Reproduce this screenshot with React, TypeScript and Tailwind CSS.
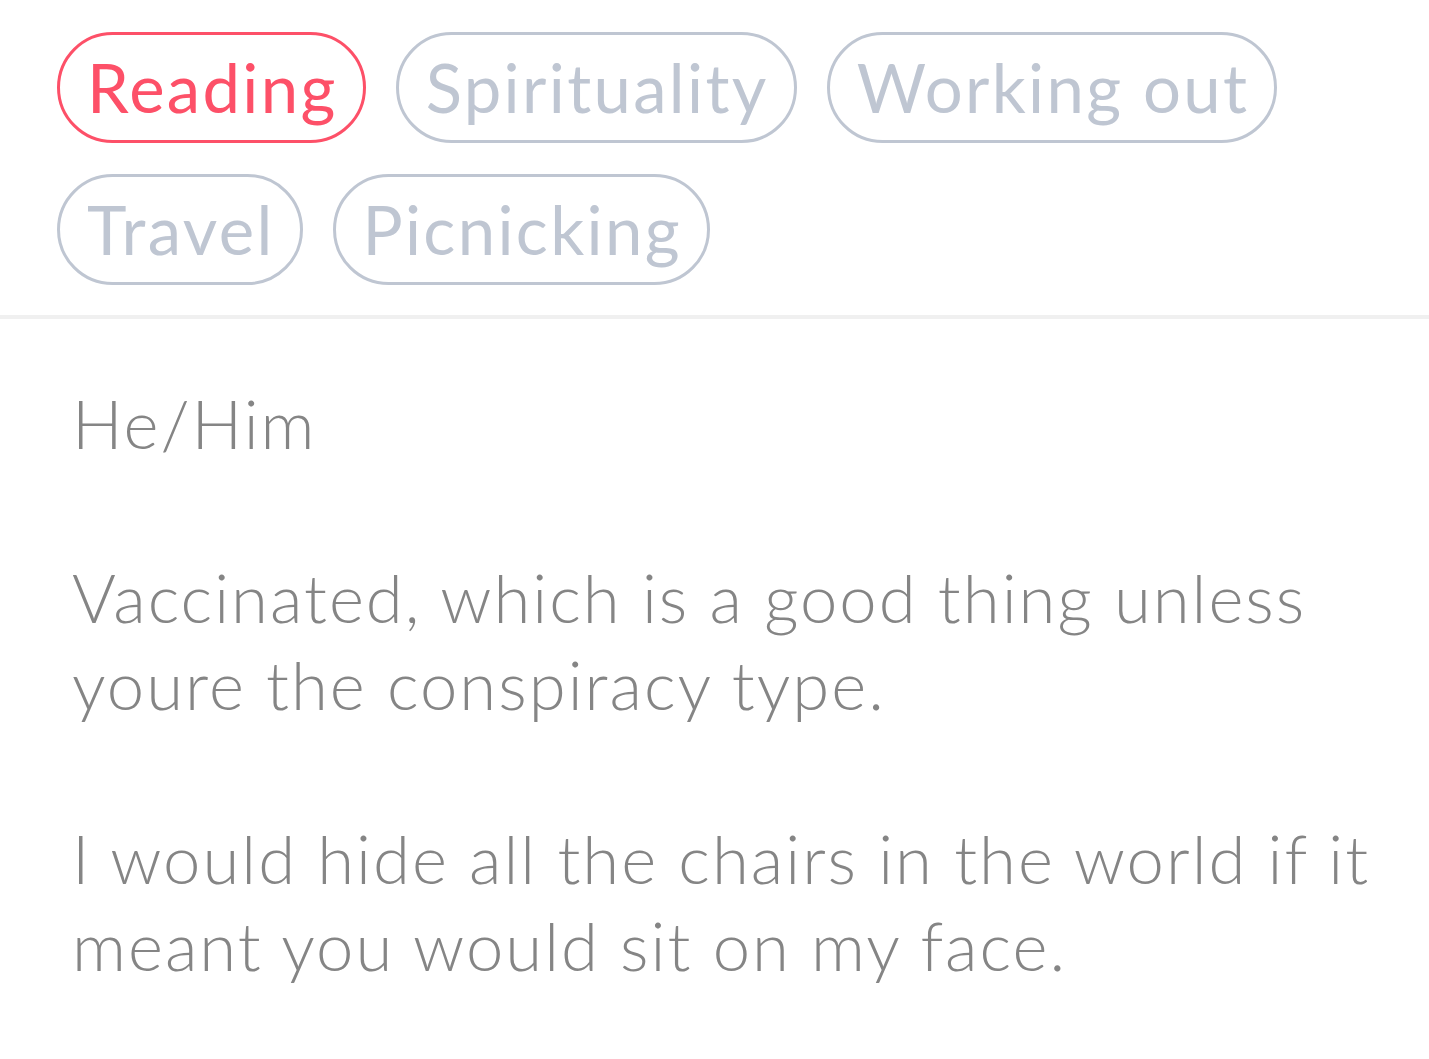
const interests = [
  { label: "Reading", active: true },
  { label: "Spirituality", active: false },
  { label: "Working out", active: false },
  { label: "Travel", active: false },
  { label: "Picnicking", active: false },
];

export default function App() {
  return (
    <div className="min-h-screen bg-white" style={{ fontFamily: "Lato, 'Noto Sans', sans-serif" }}>
      <div className="flex flex-wrap gap-x-[30px] gap-y-[31px] pl-[57px] pr-[40px] pt-[32px] pb-[30px]">
        {interests.map((item) => (
          <span
            key={item.label}
            className={
              "h-[111px] flex items-center rounded-full border-[3px] pl-[27px] pr-[25px] text-[67px] leading-none tracking-[0.035em] " +
              (item.active ? "border-[#fd5068] text-[#fd5068]" : "border-[#bfc6d2] text-[#bfc6d2]")
            }
          >
            {item.label}
          </span>
        ))}
      </div>
      <div className="h-[4px] bg-[#f0f0f0]" />
      <div className="pl-[72px] pr-[12px] pt-[61px] text-[67px] font-light leading-[87px] tracking-[0.03em] text-[#858585] whitespace-pre-wrap">
        {"He/Him\n\nVaccinated, which is a good thing unless youre the conspiracy type.\n\nI would hide all the chairs in the world if it meant you would sit on my face."}
      </div>
    </div>
  );
}
